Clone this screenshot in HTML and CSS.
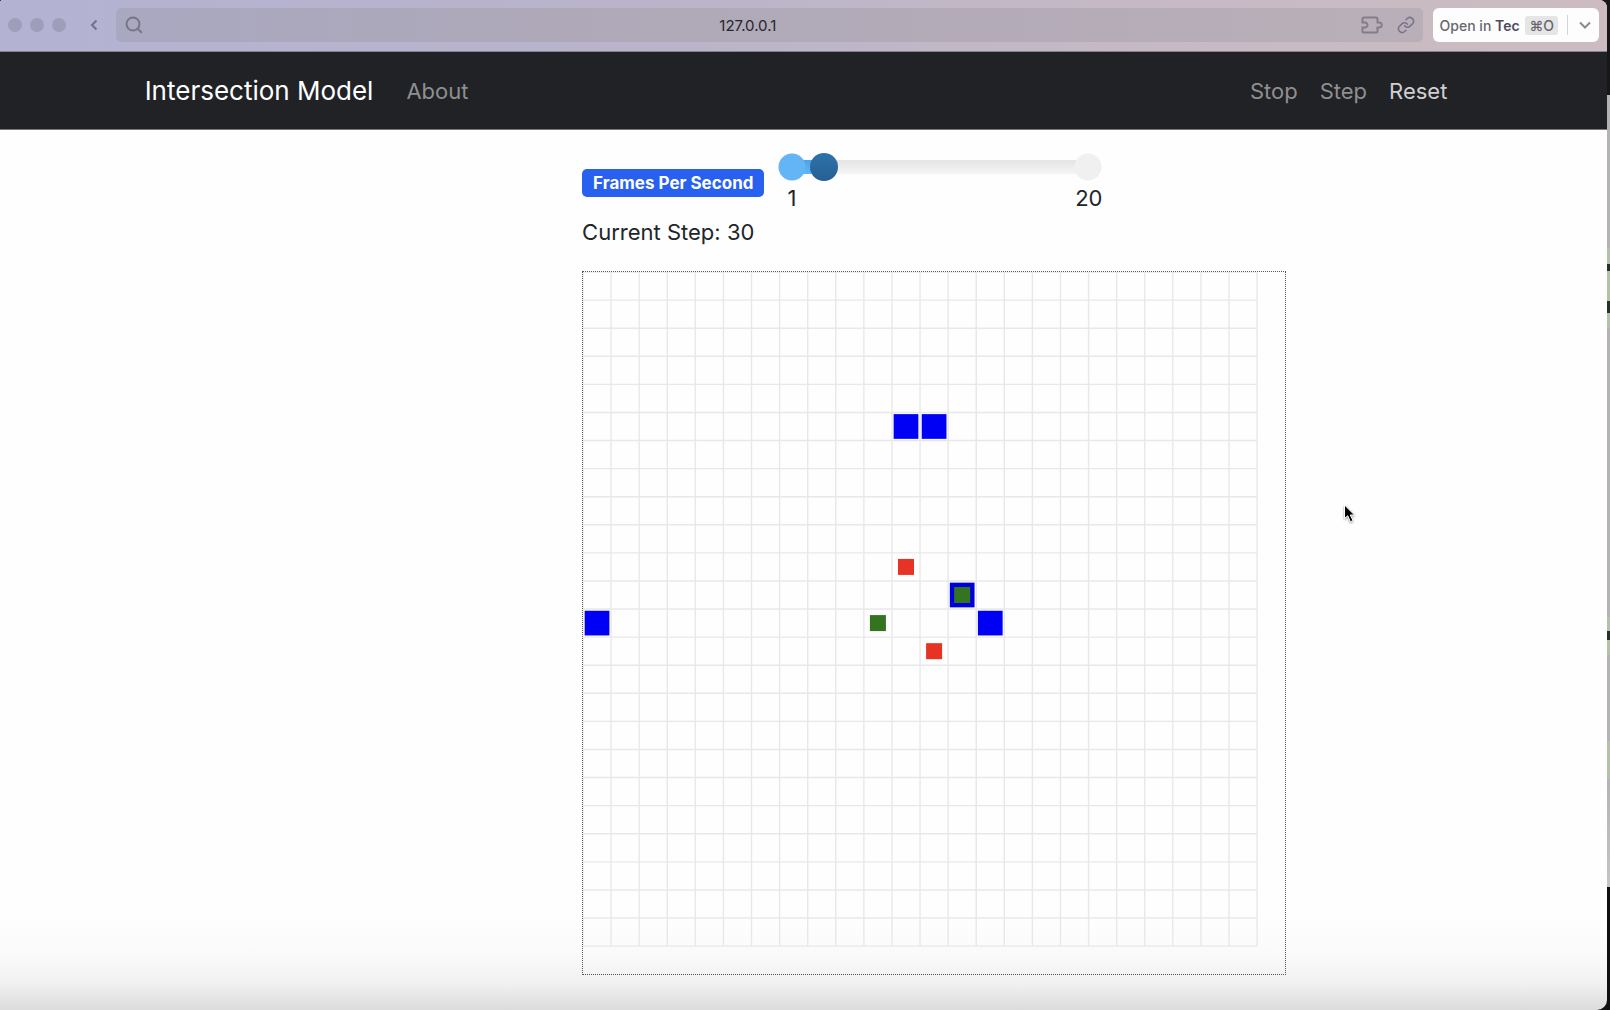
FILE: index.html
```html
<!DOCTYPE html>
<html lang="en">
<head>
    <meta charset="UTF-8">
    <meta name="viewport" content="width=device-width, initial-scale=1.0">
    <title>Intersection Model</title>
    <link rel="stylesheet" href="styles.css">
</head>
<body>
    <div class="window">
        <header class="toolbar">
            <div class="lights">
                <span class="light"></span>
                <span class="light"></span>
                <span class="light"></span>
            </div>
            <button class="back" aria-label="Back">
                <svg width="10" height="14" viewBox="0 0 10 14"><path d="M7.5 2.5 3 7l4.5 4.5"/></svg>
            </button>
            <div class="address">
                <svg class="icon" width="18" height="18" viewBox="0 0 18 18"><circle cx="8" cy="8" r="6.5"/><path d="m12.8 12.8 3.4 3.4"/></svg>
                <input class="url" type="text" value="127.0.0.1" aria-label="Address">
                <svg class="icon extension" width="24" height="18" viewBox="0 0 24 18"><path d="M3 1.500H15a1.500 1.500 0 0 1 1.500 1.500V6.500h1.800a2.300 2.300 0 1 1 0 5H16.500V15a1.500 1.500 0 0 1-1.500 1.500H3A1.500 1.500 0 0 1 1.500 15V11.500H4a2.300 2.300 0 1 0 0-5H1.500V3A1.500 1.500 0 0 1 3 1.500z"/></svg>
                <svg class="icon" width="18" height="18" viewBox="0 0 24 24"><path d="M10 13a5 5 0 0 0 7.500.5l3.500-3.500a5 5 0 0 0-7-7l-2 2M14 11a5 5 0 0 0-7.500-.5L3 14a5 5 0 0 0 7 7l2-2"/></svg>
            </div>
            <div class="open-in">
                <button class="open-button">Open in <b>Tec</b> <kbd>⌘O</kbd></button>
                <button class="open-more" aria-label="More">
                    <svg width="12" height="8" viewBox="0 0 12 8"><path d="m1 1.500 5 5 5-5"/></svg>
                </button>
            </div>
        </header>

        <nav class="navbar">
            <div class="container nav-row">
                <a class="brand" href="#">Intersection Model</a>
                <a class="nav-link" href="#about">About</a>
                <div class="controls">
                    <a class="nav-link" href="#stop">Stop</a>
                    <a class="nav-link" href="#step">Step</a>
                    <a class="nav-link active" href="#reset">Reset</a>
                </div>
            </div>
        </nav>

        <main class="container main-row">
            <div class="sidebar"></div>
            <div class="content">
                <div class="fps">
                    <label class="badge" for="fps">Frames Per Second</label>
                    <div class="slider">
                        <input type="range" id="fps" min="1" max="20" value="3">
                        <div class="ticks"><span>1</span><span>20</span></div>
                    </div>
                </div>
                <p class="step">Current Step: <span id="current-step">30</span></p>
                <div class="canvas">
                    <svg id="grid" viewBox="0 0 500 500"></svg>
                </div>
            </div>
        </main>

        <svg class="pointer" width="14" height="20" viewBox="0 0 14 20"><path d="M1.500 1v13.500l3.200-2.700 2.700 6 2.600-1.200-2.700-5.600h4.200z"/></svg>
    </div>

    <script src="grid.js"></script>
</body>
</html>
```
FILE: styles.css
```css
* {
    box-sizing: border-box;
}

body {
    margin: 0;
    min-height: 100vh;
    padding-right: 3px;
    background: linear-gradient(#171717 95px, #b4b2b3 95px, #b4b2b3 248px, #b1c3a4 248px, #b1c3a4 264px, #24332a 264px, #24332a 271px, #b1c3a4 271px, #b1c3a4 301px, #24332a 301px, #24332a 313px, #b1c3a4 313px, #b1c3a4 328px, #b4b2b3 328px, #b4b2b3 617px, #b1c3a4 617px, #b1c3a4 631px, #24332a 631px, #24332a 640px, #b1c3a4 640px, #b1c3a4 655px, #b4b2b3 655px, #b4b2b3 741px, #b1c3a4 741px, #b1c3a4 779px, #b4b2b3 779px, #c4c4c4 887px, #101010 887px);
    font-family: "Inter", sans-serif;
    color: #212529;
}

button {
    border: none;
    padding: 0;
    background: none;
    font: inherit;
    color: inherit;
}

svg {
    display: block;
}

.window {
    position: relative;
    min-height: 100vh;
    border-radius: 3px 8px 10px 0;
    overflow: hidden;
    background: linear-gradient(to top, #dcdcdc, #f0f0f0 26px, #fafafa 56px, #fefefe 90px);
}

.toolbar {
    display: flex;
    align-items: center;
    height: 52px;
    padding: 0 8px 1px;
    background: linear-gradient(to right, #b4b2d3, #b9b4cb 40%, #c7bac4 75%, #ccbcc1);
    border-bottom: 1px solid #85828c;
}

.lights {
    display: flex;
    gap: 8px;
}

.light {
    width: 14px;
    height: 14px;
    border-radius: 50%;
    background: #9f9db9;
}

.back {
    margin: 0 17px 0 23px;
    stroke: #737187;
    stroke-width: 2;
    fill: none;
}

.address {
    flex: 1;
    display: flex;
    align-items: center;
    gap: 12px;
    height: 34px;
    padding: 0 8px 0 9px;
    border-radius: 5px;
    background: linear-gradient(to right, #a9a8c1, #aea8b8 35%, #b9afb8);
}

.icon {
    fill: none;
    stroke: #79748a;
    stroke-width: 2;
    stroke-linecap: round;
}

.extension {
    stroke: #857c88;
}

.url {
    flex: 1;
    min-width: 0;
    padding: 0 8px 0 0;
    border: none;
    background: none;
    text-align: center;
    font: 15px "Inter", sans-serif;
    color: #28252c;
}

.open-in {
    display: flex;
    align-items: center;
    height: 34px;
    margin-left: 10px;
    padding: 0 8px 0 7px;
    border-radius: 6px;
    background: #fdfdfe;
    font-size: 14px;
    font-weight: 500;
    color: #68666c;
}

.open-button b {
    font-weight: 600;
    color: #4f4a5c;
}

kbd {
    display: inline-block;
    margin-left: 2px;
    padding: 0 4px;
    border-radius: 3px;
    background: #e5e5e6;
    font: inherit;
    line-height: 19px;
}

.open-more {
    display: flex;
    align-items: center;
    height: 20px;
    margin-left: 9px;
    padding-left: 11px;
    border-left: 1px solid #d5d5d8;
    stroke: #8b898f;
    stroke-width: 2;
    fill: none;
}

.navbar {
    background: #212226;
    border-bottom: 1px solid #77787b;
}

.container {
    width: 82%;
    margin: 0 auto;
}

.nav-row {
    display: flex;
    align-items: center;
    height: 77px;
}

.brand {
    margin-right: 33px;
    font-size: 26px;
    color: #fff;
    text-decoration: none;
}

.nav-link {
    font-size: 22px;
    color: #8e8f91;
    text-decoration: none;
}

.nav-link.active {
    color: #d0d0d2;
}

.controls {
    display: flex;
    gap: 22px;
    margin-left: auto;
    padding-right: 15px;
}

.main-row {
    display: flex;
    padding-top: 22px;
}

.sidebar {
    width: 33.2%;
}

.content {
    flex: 1;
}

.fps {
    display: flex;
    align-items: flex-start;
    gap: 14px;
}

.badge {
    margin-top: 17px;
    padding: 0 11px;
    border-radius: 5px;
    background: #2860f0;
    font-size: 17px;
    font-weight: 700;
    line-height: 28px;
    color: #fff;
}

.slider {
    width: 324px;
}

/* the two end circles and the track are painted on the input */
.slider input {
    display: block;
    appearance: none;
    width: 100%;
    height: 30px;
    margin: 0;
    background:
        radial-gradient(circle at 14px 15px, #63b5f6 13px, transparent 14px),
        radial-gradient(circle at calc(100% - 14px) 15px, #f0f0f0 13px, transparent 14px),
        linear-gradient(#4aa3e8, #63b5f6) 14px 8px / 32px 14px no-repeat,
        linear-gradient(#e4e4e4, #f5f5f5) 14px 8px / calc(100% - 28px) 14px no-repeat;
}

.slider input::-webkit-slider-thumb {
    appearance: none;
    width: 28px;
    height: 28px;
    border-radius: 50%;
    background: linear-gradient(#2f73ac, #255f94);
}

.ticks {
    display: flex;
    justify-content: space-between;
    padding-left: 9px;
    font-size: 22px;
    line-height: 32px;
}

.step {
    margin: 0;
    font-size: 22px;
    line-height: 36px;
}

.canvas {
    width: 80%;
    margin-top: 21px;
    border: 1px dotted #555;
}

.line {
    stroke: #e8e8e8;
}

.pointer {
    position: absolute;
    left: 1343px;
    top: 504px;
    stroke: #fff;
    filter: drop-shadow(0 1px 1px #999);
}
```
FILE: grid.js
```js
const svg = document.getElementById("grid");
const cells = 24;
const cell = 20;

const agents = [
    { x: 11, y: 5, size: 0.88, color: "#0000f5" },
    { x: 12, y: 5, size: 0.88, color: "#0000f5" },
    { x: 0, y: 12, size: 0.88, color: "#0000f5" },
    { x: 14, y: 12, size: 0.88, color: "#0000f5" },
    { x: 13, y: 11, size: 0.88, color: "#0000dc" },
    { x: 13, y: 11, size: 0.57, color: "#32741f" },
    { x: 10, y: 12, size: 0.57, color: "#32741f" },
    { x: 11, y: 10, size: 0.57, color: "#e63323" },
    { x: 12, y: 13, size: 0.57, color: "#e63323" }
];

function draw(name, attributes) {
    const node = document.createElementNS("http://www.w3.org/2000/svg", name);
    for (const key in attributes) {
        node.setAttribute(key, attributes[key]);
    }
    svg.appendChild(node);
}

const end = cells * cell;
for (let i = 0; i <= cells; i++) {
    const p = i * cell;
    draw("line", { class: "line", x1: p, y1: 0, x2: p, y2: end });
    draw("line", { class: "line", x1: 0, y1: p, x2: end, y2: p });
}

agents.forEach(agent => {
    const side = agent.size * cell;
    const offset = (cell - side) / 2;
    draw("rect", {
        x: agent.x * cell + offset,
        y: agent.y * cell + offset,
        width: side,
        height: side,
        fill: agent.color
    });
});
```
